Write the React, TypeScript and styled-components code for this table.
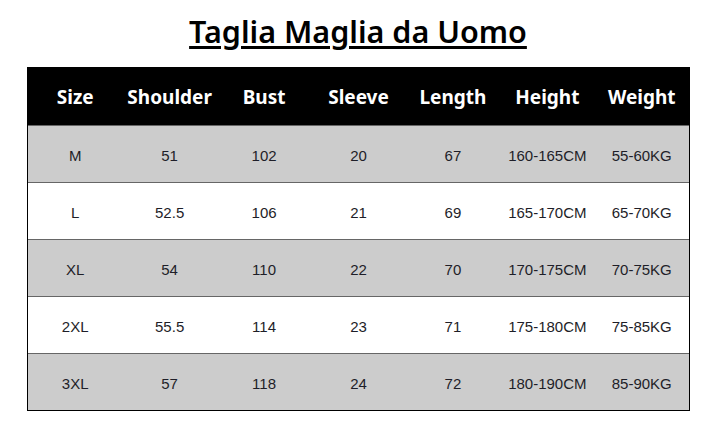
import React from "react";
import styled, { createGlobalStyle } from "styled-components";

const Global = createGlobalStyle`
  html, body { margin: 0; padding: 0; background: #fff; }
  body { width: 716px; height: 435px; overflow: hidden; }
`;

const Page = styled.div`
  width: 716px;
  height: 435px;
  display: flex;
  flex-direction: column;
  align-items: center;
`;

const Title = styled.h1`
  margin: 9px 0 0 0;
  height: 58px;
  box-sizing: border-box;
  font-family: "Noto Sans", "Open Sans", sans-serif;
  font-size: 30.5px;
  font-weight: 600;
  line-height: 44px;
  color: #000;
  text-decoration: underline;
  text-decoration-thickness: 3px;
  text-underline-offset: 3px;
`;

const Table = styled.div`
  align-self: flex-start;
  margin-left: 27px;
  width: 663px;
  border: 1px solid #000;
  box-sizing: border-box;
  display: flex;
  flex-direction: column;
`;

const Row = styled.div<{ $bg: string; $head?: boolean }>`
  display: grid;
  grid-template-columns: repeat(7, 1fr);
  height: 57px;
  box-sizing: border-box;
  background: ${(p) => p.$bg};
  border-top: ${(p) => (p.$head ? "none" : "1px solid #666")};
  align-items: center;
`;

const HeadCell = styled.div`
  text-align: center;
  color: #fff;
  font-family: "Noto Sans", "Open Sans", sans-serif;
  font-weight: 700;
  font-size: 19px;
  padding-top: 1px;
`;

const Cell = styled.div`
  text-align: center;
  color: #1e1e28;
  font-family: "Liberation Sans", Arial, sans-serif;
  font-size: 15px;
  padding-top: 3px;
`;

const headers = ["Size", "Shoulder", "Bust", "Sleeve", "Length", "Height", "Weight"];
const rows = [
  ["M", "51", "102", "20", "67", "160-165CM", "55-60KG"],
  ["L", "52.5", "106", "21", "69", "165-170CM", "65-70KG"],
  ["XL", "54", "110", "22", "70", "170-175CM", "70-75KG"],
  ["2XL", "55.5", "114", "23", "71", "175-180CM", "75-85KG"],
  ["3XL", "57", "118", "24", "72", "180-190CM", "85-90KG"],
];

export default function App() {
  return (
    <Page>
      <Global />
      <Title>Taglia Maglia da Uomo</Title>
      <Table>
        <Row $bg="#000" $head>
          {headers.map((h) => (
            <HeadCell key={h}>{h}</HeadCell>
          ))}
        </Row>
        {rows.map((r, i) => (
          <Row key={i} $bg={i % 2 === 0 ? "#cccccc" : "#ffffff"}>
            {r.map((c, j) => (
              <Cell key={j}>{c}</Cell>
            ))}
          </Row>
        ))}
      </Table>
    </Page>
  );
}
